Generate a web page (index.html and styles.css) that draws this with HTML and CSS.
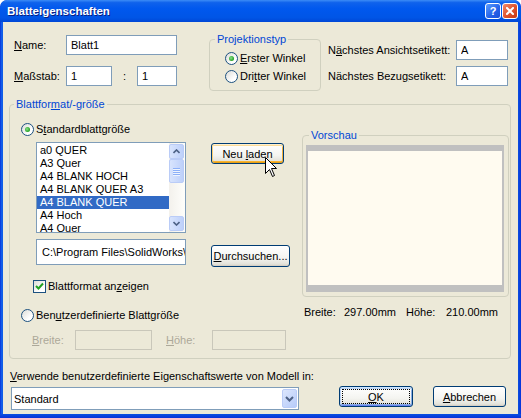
FILE: index.html
```html
<!DOCTYPE html>
<html lang="de">
<head>
    <meta charset="UTF-8">
    <title>Blatteigenschaften</title>
    <link rel="stylesheet" href="styles.css">
</head>
<body>
<div class="window">
    <div class="titlebar">
        <span class="title">Blatteigenschaften</span>
        <div class="title-buttons">
            <span class="tbtn help">?</span>
            <span class="tbtn close">
                <svg width="8" height="8" viewBox="0 0 8 8"><path d="M1 1 L7 7 M7 1 L1 7" stroke="#fff" stroke-width="2" stroke-linecap="square"/></svg>
            </span>
        </div>
    </div>

    <div class="dialog">
        <!-- name / scale / projection / labels -->
        <div class="top-row">
            <div class="name-grid">
                <label><u>N</u>ame:</label>
                <input class="edit name-edit" value="Blatt1">
                <label><u>M</u>aßstab:</label>
                <div class="scale">
                    <input class="edit scale-a" value="1">
                    <span class="colon">:</span>
                    <input class="edit scale-b" value="1">
                </div>
            </div>

            <fieldset class="group proj">
                <legend>Projektionstyp</legend>
                <div class="proj-body">
                    <div class="radio-row"><span class="radio checked"></span><u>E</u>rster Winkel</div>
                    <div class="radio-row"><span class="radio"></span>Dri<u>t</u>ter Winkel</div>
                </div>
            </fieldset>

            <div class="label-grid">
                <label>N<u>ä</u>chstes Ansichtsetikett:</label>
                <input class="edit small-edit" value="A">
                <label>Nächstes Bezu<u>g</u>setikett:</label>
                <input class="edit small-edit" value="A">
            </div>
        </div>

        <!-- sheet format -->
        <fieldset class="group sheet">
            <legend>Blattfor<u>m</u>at/-größe</legend>
            <div class="sheet-inner">
                <div class="sheet-left">
                    <div class="radio-row"><span class="radio checked"></span>S<u>t</u>andardblattgröße</div>

                    <div class="list-row">
                        <div class="listbox">
                            <div class="items">
                                <div class="item">a0 QUER</div>
                                <div class="item">A3 Quer</div>
                                <div class="item">A4 BLANK HOCH</div>
                                <div class="item">A4 BLANK QUER A3</div>
                                <div class="item selected">A4 BLANK QUER</div>
                                <div class="item">A4 Hoch</div>
                                <div class="item">A4 Quer</div>
                            </div>
                            <div class="vscroll">
                                <span class="sbtn">
                                    <svg width="7" height="5" viewBox="0 0 7 5"><path d="M0.5 4 L3.5 1 L6.5 4" fill="none" stroke="#4D6185" stroke-width="1.6"/></svg>
                                </span>
                                <span class="thumb"><i></i><i></i><i></i><i></i></span>
                                <span class="track"></span>
                                <span class="sbtn">
                                    <svg width="7" height="5" viewBox="0 0 7 5"><path d="M0.5 1 L3.5 4 L6.5 1" fill="none" stroke="#4D6185" stroke-width="1.6"/></svg>
                                </span>
                            </div>
                        </div>
                        <button class="btn hot reload">Neu <u>l</u>aden</button>
                    </div>

                    <div class="path-row">
                        <input class="edit path" value="C:\Program Files\SolidWorks\lang\german\sheetformat">
                        <button class="btn browse"><u>D</u>urchsuchen...</button>
                    </div>

                    <div class="check-row">
                        <span class="checkbox">
                            <svg width="11" height="11" viewBox="0 0 11 11"><path d="M2 5 L4.5 7.5 L9 2.5" fill="none" stroke="#21A121" stroke-width="2"/></svg>
                        </span>
                        Blattformat an<u>z</u>eigen
                    </div>

                    <div class="radio-row custom"><span class="radio"></span>Ben<u>u</u>tzerdefinierte Blattgröße</div>

                    <div class="size-row">
                        <label class="disabled size-label"><u>B</u>reite:</label>
                        <input class="edit off w-edit" disabled>
                        <label class="disabled size-label h-label"><u>H</u>öhe:</label>
                        <input class="edit off h-edit" disabled>
                    </div>
                </div>

                <div class="sheet-right">
                    <fieldset class="group preview-group">
                        <legend>Vorschau</legend>
                        <div class="preview"></div>
                    </fieldset>
                    <div class="dims">
                        <span class="d1">Breite:</span><span class="d2">297.00mm</span><span class="d1">Höhe:</span><span>210.00mm</span>
                    </div>
                </div>
            </div>
        </fieldset>

        <!-- bottom -->
        <div class="model-label"><u>V</u>erwende benutzerdefinierte Eigenschaftswerte von Modell in:</div>
        <div class="bottom-row">
            <div class="combo">
                <span>Standard</span>
                <span class="combo-btn">
                    <svg width="9" height="6" viewBox="0 0 9 6"><path d="M1 1 L4.5 4.5 L8 1" fill="none" stroke="#4D6185" stroke-width="2"/></svg>
                </span>
            </div>
            <button class="btn default ok"><u>O</u>K</button>
            <button class="btn cancel"><u>A</u>bbrechen</button>
        </div>
    </div>

    <!-- mouse pointer over "Neu laden" -->
    <svg class="pointer" width="13" height="21" viewBox="0 0 13 21">
        <path d="M0.5 0.5 L0.5 16.5 L4.5 12.5 L7.5 19.5 L9.5 18.5 L6.5 11.5 L11.5 11.5 Z" fill="#fff" stroke="#000" stroke-width="1"/>
    </svg>
</div>
</body>
</html>
```

FILE: styles.css
```css
* {
    margin: 0;
    padding: 0;
    box-sizing: border-box;
}
body {
    margin: 0;
    background: #fff;
    font-family: "Liberation Sans", Arial, sans-serif;
    font-size: 11px;
    color: #000;
}
u {
    text-decoration: underline;
    text-underline-offset: 1px;
}
.window {
    position: relative;
    width: 521px;
    height: 418px;
    padding: 0 3px 4px;
    background: linear-gradient(90deg, #0831D9, #166AEE 2px, #0A50DF 3px, #0A50DF calc(100% - 3px), #0831D9);
    border-radius: 7px 7px 0 0;
    overflow: hidden;
}
.window::after {
    content: "";
    position: absolute;
    left: 0;
    right: 0;
    bottom: 0;
    height: 4px;
    background: linear-gradient(#0A50DF, #0831D9);
}

/* title bar */
.titlebar {
    height: 22px;
    margin: 0 -3px;
    display: flex;
    align-items: center;
    justify-content: space-between;
    padding: 0 3px 0 7px;
    background: linear-gradient(#3C8CF6 0%, #0F62EC 12%, #0058EE 40%, #0055E6 80%, #0047D6 100%);
    border-radius: 7px 7px 0 0;
}
.title {
    color: #fff;
    font-weight: bold;
    font-size: 11.5px;
    text-shadow: 1px 1px #0A1E80;
    margin-top: -1px;
}
.title-buttons {
    display: flex;
    gap: 1px;
    margin-top: -1px;
}
.tbtn {
    width: 16px;
    height: 16px;
    border: 1px solid #fff;
    border-radius: 3px;
    display: flex;
    align-items: center;
    justify-content: center;
    color: #fff;
    font-weight: bold;
    font-size: 11px;
}
.help {
    background: linear-gradient(135deg, #5C9DFF, #2461E8 60%, #1A4FD8);
}
.close {
    background: linear-gradient(135deg, #F08A6C, #E0522C 55%, #C43A14);
}

/* dialog body */
.dialog {
    height: 392px;
    background: #ECE9D8;
    padding: 10px 0 0 6px;
}
.top-row {
    display: flex;
    align-items: flex-start;
    padding-left: 5px;
}
.name-grid {
    display: grid;
    grid-template-columns: 52px 111px;
    row-gap: 11px;
    align-items: center;
    margin-top: 3px;
}
.edit {
    height: 20px;
    border: 1px solid #7F9DB9;
    background: #fff;
    font: inherit;
    color: #000;
    padding: 0 0 0 4px;
    outline: none;
}
.scale {
    display: flex;
    align-items: center;
}
.scale-a { width: 46px; }
.scale-b { width: 40px; }
.colon {
    width: 26px;
    text-align: center;
}

/* group boxes: no side padding, so the caption sits at border + margin */
.group {
    border: 1px solid #D0D0BF;
    border-radius: 4px;
    min-width: 0;
    padding: 0;
}
.group legend {
    color: #0046D5;
    line-height: 14px;
    padding: 0 2px;
    margin-left: 5px;
}
.proj {
    width: 112px;
    margin-left: 32px;
}
.proj-body {
    padding: 3px 0 5px 15px;
}
.radio-row {
    display: flex;
    align-items: center;
    height: 18px;
    white-space: nowrap;
}
.radio {
    width: 13px;
    height: 13px;
    margin-right: 2px;
    border: 1px solid #1C5180;
    border-radius: 50%;
    background: linear-gradient(135deg, #DCDCD7, #FFFFFF 70%);
    display: flex;
    align-items: center;
    justify-content: center;
}
.radio.checked::after {
    content: "";
    width: 5px;
    height: 5px;
    border-radius: 50%;
    background: radial-gradient(circle at 40% 40%, #8BE08B, #21A121 70%);
}
.label-grid {
    display: grid;
    grid-template-columns: 128px 52px;
    row-gap: 6px;
    align-items: center;
    margin: 8px 0 0 7px;
    white-space: nowrap;
}

/* sheet format group */
.sheet {
    width: 502px;
    margin-top: 6px;
}
.sheet > legend {
    margin-left: 4px;
}
.sheet-inner {
    display: flex;
    align-items: flex-start;
    padding: 9px 1px 8px 11px;
}
.sheet-left {
    width: 281px;
}
.list-row,
.path-row {
    display: flex;
    align-items: flex-start;
    padding-left: 15px;
}
.list-row {
    margin-top: 4px;
}
.listbox {
    width: 150px;
    height: 91px;
    border: 1px solid #7F9DB9;
    background: #fff;
    display: flex;
    overflow: hidden;
}
.items {
    flex: 1;
    padding-top: 1px;
    overflow: hidden;
}
.item {
    height: 13px;
    line-height: 13px;
    padding-left: 3px;
    white-space: nowrap;
}
.item.selected {
    background: #316AC5;
    color: #fff;
}
.vscroll {
    width: 16px;
    display: flex;
    flex-direction: column;
    padding: 1px 1px 1px 0;
    background: linear-gradient(90deg, #F3F1EC, #FEFEFB);
}
.sbtn,
.thumb {
    width: 15px;
    border: 1px solid #BACCF7;
    border-radius: 2px;
    background: linear-gradient(90deg, #D8E4FD, #BDD0FA);
    display: flex;
    align-items: center;
    justify-content: center;
}
.sbtn {
    height: 15px;
}
.thumb {
    height: 24px;
    flex-direction: column;
    gap: 1px;
}
.thumb i {
    display: block;
    width: 7px;
    height: 1px;
    background: #8CB0F8;
    box-shadow: 0 1px #EEF4FE;
}
.track {
    flex: 1;
}

.btn {
    font: inherit;
    color: #000;
    border: 1px solid #003C74;
    border-radius: 3px;
    background: linear-gradient(#FFFFFF, #F4F4F0 60%, #E3E2DA 90%, #D6D0C5);
    box-shadow: inset 0 -1px #D6D0C5;
}
.hot {
    box-shadow: inset 0 1px #FFF0CF, inset 0 2px #FCDC98, inset 1px 0 #FBCF73, inset -1px 0 #F5B13B, inset 0 -1px #E5A01A, inset 0 -2px #F8B330;
}
.default {
    box-shadow: inset 0 1px #CEE7FF, inset 0 2px #BCD4F6, inset 1px 0 #BCD4F6, inset -1px 0 #89ADE4, inset 0 -1px #6982EE, inset 0 -2px #89ADE4;
    outline: 1px dotted #000;
    outline-offset: -4px;
}
.reload {
    width: 73px;
    height: 21px;
    margin: 1px 0 0 25px;
}
.path-row {
    margin-top: 6px;
}
.path {
    width: 150px;
    height: 26px;
    padding-left: 5px;
}
.browse {
    width: 79px;
    height: 22px;
    margin: 6px 0 0 25px;
}
.check-row {
    display: flex;
    align-items: center;
    height: 16px;
    margin-top: 11px;
    padding-left: 12px;
}
.checkbox {
    width: 13px;
    height: 13px;
    margin-right: 2px;
    border: 1px solid #1C5180;
    background: linear-gradient(135deg, #DCDCD7, #FFFFFF 70%);
    display: flex;
    align-items: center;
    justify-content: center;
}
.custom {
    margin-top: 12px;
}
.size-row {
    display: flex;
    align-items: center;
    margin-top: 6px;
    padding-left: 11px;
}
.disabled {
    color: #ACA899;
}
.size-label {
    width: 43px;
}
.h-label {
    width: 46px;
    margin-left: 14px;
}
.off {
    background: #ECE9D8;
    border-color: #C9C7BA;
}
.w-edit { width: 77px; }
.h-edit { width: 74px; }

.sheet-right {
    width: 207px;
    margin-top: 8px;
}
.preview-group legend {
    margin-left: 6px;
}
.preview {
    height: 147px;
    margin: 3px 4px 4px 3px;
    background: #FFFBF0;
    border: solid #C0C0C0;
    border-width: 6px 2px 7px 2px;
}
.dims {
    margin-top: 8px;
    padding-left: 2px;
    line-height: 14px;
    white-space: nowrap;
    display: flex;
}
.dims .d1 { width: 40px; }
.dims .d2 { width: 62px; }

/* bottom */
.model-label {
    margin: 10px 0 0 1px;
    line-height: 14px;
}
.bottom-row {
    display: flex;
    align-items: flex-start;
    margin: 4px 0 0 2px;
}
.combo {
    width: 288px;
    height: 23px;
    border: 1px solid #7F9DB9;
    background: #fff;
    display: flex;
    align-items: center;
    justify-content: space-between;
    padding: 1px 1px 1px 2px;
}
.combo-btn {
    width: 15px;
    height: 19px;
    border: 1px solid #BACCF7;
    border-radius: 2px;
    background: linear-gradient(135deg, #DCE6FD, #B6CBF9);
    display: flex;
    align-items: center;
    justify-content: center;
}
.ok {
    width: 74px;
    height: 21px;
    margin: -1px 0 0 40px;
}
.cancel {
    width: 73px;
    height: 21px;
    margin: -1px 0 0 20px;
}
.pointer {
    position: absolute;
    left: 265px;
    top: 157px;
}
```
